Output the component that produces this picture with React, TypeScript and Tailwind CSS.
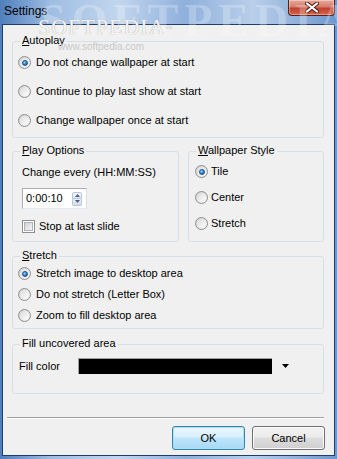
import React from "react";

const font = { fontFamily: '"Liberation Sans", Arial, sans-serif' };

function Radio({ checked }: { checked?: boolean }) {
  return (
    <span className="flex h-[13px] w-[13px] shrink-0 items-center justify-center rounded-full border border-[#8e8f8f] bg-[linear-gradient(135deg,#cfcfcf,#f7f7f7)]">
      <span className="flex h-[9px] w-[9px] items-center justify-center rounded-full bg-[linear-gradient(135deg,#dcdcdc,#fdfdfd)]">
        {checked && (
          <span className="h-[6px] w-[6px] rounded-full border border-[#1c4f8c] bg-[radial-gradient(circle_at_35%_35%,#9fdcff,#2a7fd0_55%,#174f9a)]" />
        )}
      </span>
    </span>
  );
}

function Group({
  label,
  ul,
  className,
  children,
}: {
  label: string;
  ul?: boolean;
  className: string;
  children?: React.ReactNode;
}) {
  return (
    <div className={"relative rounded-[3px] border border-[#d5dfe5] " + className}>
      <span className="absolute left-[7px] top-[-8px] bg-[#f0f0f0] px-[2px] text-[11px] leading-[13px] text-black">
        {ul ? (
          <>
            <span className="underline">{label[0]}</span>
            {label.slice(1)}
          </>
        ) : (
          label
        )}
      </span>
      {children}
    </div>
  );
}

function RadioRow({ checked, text, gap = "gap-[5px]" }: { checked?: boolean; text: string; gap?: string }) {
  return (
    <div className={"flex h-[13px] items-center " + gap}>
      <Radio checked={checked} />
      <span className="text-[11px] leading-[13px] text-black">{text}</span>
    </div>
  );
}

function Btn({ label, def }: { label: string; def?: boolean }) {
  return (
    <div
      className={
        "flex h-[24px] w-[73px] items-center justify-center rounded-[3px] border text-[11px] text-black " +
        (def
          ? "border-[#3c7fb1] shadow-[inset_0_0_0_1px_#a6e2f6] bg-[linear-gradient(180deg,#eaf6fd_0%,#d9f0fc_45%,#bee6fd_50%,#a7d9f5_100%)]"
          : "border-[#707070] shadow-[inset_0_0_0_1px_#fbfbfb] bg-[linear-gradient(180deg,#f2f2f2_0%,#ebebeb_45%,#dddddd_50%,#cfcfcf_100%)]")
      }
    >
      {label}
    </div>
  );
}

export default function App() {
  return (
    <div
      style={font}
      className="relative flex h-[459px] w-[337px] flex-col overflow-hidden bg-[linear-gradient(90deg,#4f7fbd_0%,#9fbde2_15%,#c2d6ee_35%,#8fb0dc_55%,#b9cfea_75%,#6e97cc_100%)]"
    >
      {/* title bar */}
      <div className="relative flex h-[24px] shrink-0 items-start">
        <span className="pl-[4px] pt-[4px] text-[12px] leading-[14px] text-black">Settings</span>
        <div className="ml-auto mr-[2px] flex h-[16px] w-[47px] items-center justify-center rounded-b-[4px] border border-t-0 border-[#5a1d17] bg-[linear-gradient(180deg,#e9a99a_0%,#d47d6a_45%,#c2402c_55%,#d0664a_100%)] shadow-[inset_0_0_0_1px_rgba(255,255,255,0.35)]">
          <svg width="14" height="11" viewBox="0 0 14 11">
            <path d="M2 1.5 L12 9.5 M12 1.5 L2 9.5" stroke="#4a1a14" strokeWidth="4" strokeLinecap="round" />
            <path d="M2 1.5 L12 9.5 M12 1.5 L2 9.5" stroke="#ffffff" strokeWidth="2.2" strokeLinecap="round" />
          </svg>
        </div>
        <span
          className="pointer-events-none absolute left-[40px] top-[-14px] text-[46px] font-bold tracking-[6px] text-white/25"
          style={{ fontFamily: '"Liberation Serif", serif' }}
        >
          SOFTPEDIA
        </span>
      </div>

      {/* client */}
      <div className="mx-[2px] flex h-[432px] shrink-0 flex-col border border-[#1f3f6a] bg-[#f0f0f0]">
        {/* Autoplay */}
        <Group label="Autoplay" ul className="ml-[9px] mt-[16px] h-[97px] w-[312px]">
          <div className="flex flex-col gap-[16px] pl-[5px] pt-[14px]">
            <RadioRow checked text="Do not change wallpaper at start" />
            <RadioRow text="Continue to play last show at start" />
            <RadioRow text="Change wallpaper once at start" />
          </div>
        </Group>

        {/* row 2 */}
        <div className="ml-[9px] mt-[13px] flex h-[91px] w-[312px] gap-[9px]">
          <Group label="Play Options" ul className="h-[91px] w-[167px]">
            <div className="flex flex-col pl-[9px] pt-[14px]">
              <span className="text-[11px] leading-[13px] text-black">Change every (HH:MM:SS)</span>
              <div className="mt-[9px] flex h-[21px] w-[65px] items-center border border-[#abadb3] border-b-[#e3e9ef] border-r-[#dbdfe6] bg-white pl-[3px]">
                <span className="text-[11px] leading-[13px] text-black">0:00:10</span>
                <div className="ml-auto mr-[4px] flex flex-col">
                  <div className="flex h-[7px] w-[10px] items-center justify-center rounded-t-[2px] border border-[#b8c6d8] bg-[linear-gradient(180deg,#f4f8fc,#dce6f2)]">
                    <svg width="5" height="3" viewBox="0 0 5 3"><path d="M0 3 L2.5 0 L5 3Z" fill="#4d6185" /></svg>
                  </div>
                  <div className="flex h-[7px] w-[10px] items-center justify-center rounded-b-[2px] border border-t-0 border-[#b8c6d8] bg-[linear-gradient(180deg,#eaf0f8,#d2deee)]">
                    <svg width="5" height="3" viewBox="0 0 5 3"><path d="M0 0 L2.5 3 L5 0Z" fill="#4d6185" /></svg>
                  </div>
                </div>
              </div>
              <div className="mt-[11px] flex h-[13px] items-center gap-[4px]">
                <span className="flex h-[13px] w-[13px] items-center justify-center border border-[#8e8f8f] bg-white">
                  <span className="h-[9px] w-[9px] border border-[#aeb3b9] bg-[linear-gradient(135deg,#cfd2d6,#f4f4f4)]" />
                </span>
                <span className="text-[11px] leading-[13px] text-black">Stop at last slide</span>
              </div>
            </div>
          </Group>
          <Group label="Wallpaper Style" ul className="h-[91px] w-[136px]">
            <div className="flex flex-col gap-[13px] pl-[6px] pt-[13px]">
              <RadioRow checked text="Tile" gap="gap-[3px]" />
              <RadioRow text="Center" gap="gap-[3px]" />
              <RadioRow text="Stretch" gap="gap-[3px]" />
            </div>
          </Group>
        </div>

        {/* Stretch */}
        <Group label="Stretch" ul className="ml-[9px] mt-[14px] h-[73px] w-[312px]">
          <div className="flex flex-col gap-[8px] pl-[5px] pt-[10px]">
            <RadioRow checked text="Stretch image to desktop area" />
            <RadioRow text="Do not stretch (Letter Box)" />
            <RadioRow text="Zoom to fill desktop area" />
          </div>
        </Group>

        {/* Fill */}
        <Group label="Fill uncovered area" className="ml-[9px] mt-[15px] h-[50px] w-[312px]">
          <div className="flex h-[16px] items-center pl-[6px] mt-[13px]">
            <span className="w-[59px] text-[11px] leading-[13px] text-black">Fill color</span>
            <div className="h-[16px] w-[194px] border-l border-t border-[#a0a0a0] bg-black" />
            <svg className="ml-[10px]" width="7" height="4" viewBox="0 0 7 4">
              <path d="M0 0 L7 0 L3.5 4Z" fill="#000" />
            </svg>
          </div>
        </Group>

        {/* separator */}
        <div className="ml-[4px] mt-[23px] h-[2px] w-[317px] border-t border-[#a0a0a0] border-b-0 bg-white" />

        {/* buttons */}
        <div className="mt-[7px] flex justify-end gap-[7px] pr-[9px]">
          <Btn label="OK" def />
          <Btn label="Cancel" />
        </div>
      </div>

      {/* watermarks */}
      <span
        className="pointer-events-none absolute left-[38px] top-[10px] text-[22px] tracking-[1px] text-[#f4f4f4]"
        style={{ fontFamily: '"Liberation Serif", serif', textShadow: "0 0 1px #9a9a9a" }}
      >
        SOFTPEDIA<sup className="text-[7px]">™</sup>
      </span>
      <span className="pointer-events-none absolute left-[58px] top-[42px] text-[10px] leading-[10px] text-[#c8c8c8]">
        www.softpedia.com
      </span>
    </div>
  );
}
